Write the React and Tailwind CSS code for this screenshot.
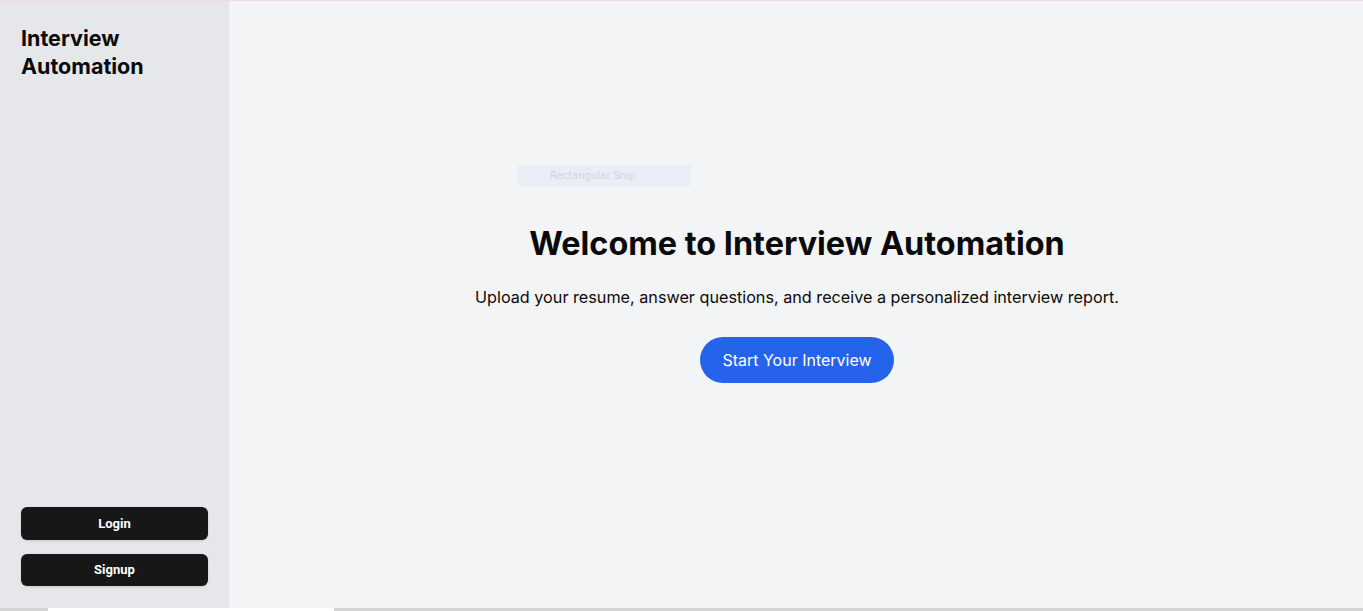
import React from 'react';

function Sidebar() {
    return (
        <aside className="flex w-[229px] shrink-0 flex-col justify-between bg-[#e5e7eb] px-[21px] pt-[23px] pb-[22px]">
            <h1 className="text-[21.5px] font-bold leading-[28px] text-[#0a0a0a]">
                Interview
                <br />
                Automation
            </h1>
            <div className="flex flex-col gap-[14px]">
                <button
                    type="button"
                    className="h-[33px] w-full rounded-md bg-[#171717] font-['Roboto',sans-serif] text-[13px] font-bold text-white shadow-sm"
                >
                    Login
                </button>
                <button
                    type="button"
                    className="h-[32px] w-full rounded-md bg-[#171717] font-['Roboto',sans-serif] text-[13px] font-bold text-white shadow-sm"
                >
                    Signup
                </button>
            </div>
        </aside>
    );
}

function App() {
    return (
        <div className="flex h-[611px] flex-col overflow-hidden font-['Inter',sans-serif]">
            <div className="h-px bg-[#f1dbe6]" />
            <div className="flex min-h-0 flex-1">
                <Sidebar />
                <main className="relative flex flex-1 flex-col items-center justify-center bg-[#f3f4f6] pb-[2px] pl-[2px]">
                    <div className="absolute left-[289px] top-[164px] flex h-[21px] w-[173px] items-center bg-[#e9eef6] pl-[32px] font-['DejaVu_Sans',sans-serif] text-[10px] text-[#d2d4d8]">
                        Rectangular Snip
                    </div>
                    <h2 className="text-[32.4px] font-bold leading-[40px] text-[#0a0a0a]">
                        Welcome to Interview Automation
                    </h2>
                    <p className="mt-[21px] text-[16.2px] leading-[24px] text-[#0a0a0a]">
                        Upload your resume, answer questions, and receive a personalized interview report.
                    </p>
                    <button
                        type="button"
                        className="mt-[28px] h-[46px] rounded-full bg-[#2563eb] px-[22px] text-[16px] font-normal text-white"
                    >
                        Start Your Interview
                    </button>
                </main>
            </div>
            <div className="flex h-[3px] bg-[#d4d4d4]">
                <div className="ml-[48px] w-[286px] bg-white" />
            </div>
        </div>
    );
}

export default App;
